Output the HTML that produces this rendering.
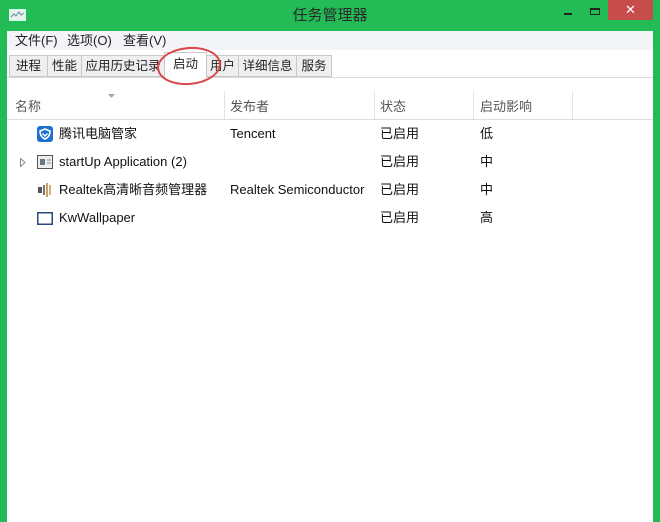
<!DOCTYPE html><html><head><meta charset="utf-8"><style>
*{margin:0;padding:0;box-sizing:border-box}
body{width:660px;height:522px;background:#22bb55;position:relative;overflow:hidden;font-family:"Liberation Sans","Noto Sans CJK SC",sans-serif;font-size:13px;color:#222}
.abs{position:absolute;white-space:nowrap;line-height:16px}
#title{left:0;top:0;width:660px;height:31px;text-align:center;line-height:31px;font-size:15px;color:#2a2a2a}
#win{left:7px;top:31px;width:646px;height:491px;background:#fff}
#menu{left:0;top:0;width:646px;height:19px;background:#f2f4f7}
.m{top:2px;font-size:13px}
#tabbar{left:0;top:19px;width:646px;height:28px;background:#fff;border-bottom:1px solid #d9d9d9}
.tab{top:5px;height:22px;border:1px solid #c8c8c8;background:#efefef;font-size:12.5px;line-height:20px;padding:0 2px;text-align:center;overflow:hidden}
.hd{top:68px;font-size:13px;color:#555}
.dv{top:60px;width:1px;height:28px;background:#e3e3e3}
.r{font-size:13px;color:#111}
</style></head><body>
<div class="abs" id="title">任务管理器</div>
<svg class="abs" style="left:9px;top:9px" width="18" height="14"><rect x="0.5" y="0.5" width="16" height="11" fill="#e8f4ea" stroke="#cfe"/><polyline points="2,8 5,5 7,7 10,3 12,6 15,4" fill="none" stroke="#68a" stroke-width="1"/></svg>
<div class="abs" style="left:564px;top:13px;width:8px;height:2px;background:#222"></div>
<div class="abs" style="left:590px;top:8px;width:10px;height:7px;border:1px solid #222;border-top-width:2px"></div>
<div class="abs" style="left:608px;top:0;width:45px;height:20px;background:#c74c4c;color:#fff;text-align:center;line-height:20px;font-size:13px">✕</div>
<div class="abs" id="win">
<div class="abs" id="menu"></div>
<div class="abs m" style="left:8px">文件(F)</div>
<div class="abs m" style="left:60px">选项(O)</div>
<div class="abs m" style="left:116px">查看(V)</div>
<div class="abs" id="tabbar"></div>
<div class="abs tab" style="left:2px;top:24px;width:39px">进程</div>
<div class="abs tab" style="left:40px;top:24px;width:35px">性能</div>
<div class="abs tab" style="left:74px;top:24px;width:84px">应用历史记录</div>
<div class="abs tab" style="left:157px;top:21px;width:43px;height:26px;background:#fff;border-bottom:none;line-height:22px">启动</div>
<div class="abs tab" style="left:199px;top:24px;width:33px">用户</div>
<div class="abs tab" style="left:231px;top:24px;width:59px">详细信息</div>
<div class="abs tab" style="left:289px;top:24px;width:36px">服务</div>
<div class="abs" style="left:150px;top:16px;width:64px;height:38px;border:2px solid #d9474a;border-radius:50%;transform:rotate(-5deg)"></div>
<svg class="abs" style="left:101px;top:63px" width="7" height="4"><path d="M0 0 L7 0 L3.5 4Z" fill="#9ab"/></svg>
<div class="abs hd" style="left:8px">名称</div>
<div class="abs dv" style="left:217px"></div>
<div class="abs hd" style="left:223px">发布者</div>
<div class="abs dv" style="left:367px"></div>
<div class="abs hd" style="left:373px">状态</div>
<div class="abs dv" style="left:466px"></div>
<div class="abs hd" style="left:473px">启动影响</div>
<div class="abs dv" style="left:565px"></div>
<div class="abs" style="left:0;top:88px;width:646px;height:1px;background:#ddd"></div>
<svg class="abs" style="left:30px;top:95px" width="16" height="16"><rect x="0" y="0" width="16" height="16" rx="3" fill="#1d6fd0"/><path d="M8 3 L13 5 Q13 11 8 13 Q3 11 3 5Z" fill="none" stroke="#fff" stroke-width="1.6"/><path d="M5.5 7.5 L8 10 L10.5 7.5" fill="none" stroke="#fff" stroke-width="1.4"/></svg>
<div class="abs r" style="left:52px;top:95px">腾讯电脑管家</div>
<div class="abs r" style="left:223px;top:95px">Tencent</div>
<div class="abs r" style="left:373px;top:95px">已启用</div>
<div class="abs r" style="left:473px;top:95px">低</div>
<svg class="abs" style="left:13px;top:127px" width="6" height="9"><path d="M0.5 0.5 L5 4.5 L0.5 8.5Z" fill="none" stroke="#888"/></svg>
<svg class="abs" style="left:30px;top:124px" width="16" height="14"><rect x="0.5" y="0.5" width="15" height="13" fill="#eee" stroke="#555"/><rect x="3" y="4" width="5" height="6" fill="#678"/><line x1="10" y1="5" x2="14" y2="5" stroke="#888"/><line x1="10" y1="8" x2="14" y2="8" stroke="#888"/></svg>
<div class="abs r" style="left:52px;top:123px">startUp Application (2)</div>
<div class="abs r" style="left:373px;top:123px">已启用</div>
<div class="abs r" style="left:473px;top:123px">中</div>
<svg class="abs" style="left:30px;top:151px" width="16" height="16"><rect x="1" y="5" width="4" height="6" fill="#555"/><rect x="6" y="3" width="2" height="10" fill="#777"/><rect x="9" y="1" width="2" height="14" fill="#c8a060"/><rect x="12" y="3" width="2" height="10" fill="#d8b070"/></svg>
<div class="abs r" style="left:52px;top:151px">Realtek高清晰音频管理器</div>
<div class="abs r" style="left:223px;top:151px">Realtek Semiconductor</div>
<div class="abs r" style="left:373px;top:151px">已启用</div>
<div class="abs r" style="left:473px;top:151px">中</div>
<svg class="abs" style="left:30px;top:181px" width="16" height="13"><rect x="0.75" y="0.75" width="14.5" height="11.5" fill="#fff" stroke="#2a4a7a" stroke-width="1.5"/></svg>
<div class="abs r" style="left:52px;top:179px">KwWallpaper</div>
<div class="abs r" style="left:373px;top:179px">已启用</div>
<div class="abs r" style="left:473px;top:179px">高</div>
</div>
</body></html>
